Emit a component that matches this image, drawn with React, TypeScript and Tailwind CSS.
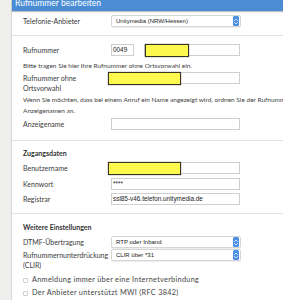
const Label = ({ children }: { children: React.ReactNode }) => (
  <div className="w-[88px] shrink-0 text-[7px] leading-[10px] text-[#3a3a3a]">{children}</div>
);

const Input = ({ value, yellow, w = "w-[129px]" }: { value?: string; yellow?: string; w?: string }) => (
  <div className={`relative ${w} h-[12px] border border-[#cfcfcf] bg-white flex items-center px-[1px]`}>
    <span className="font-['Liberation_Sans',sans-serif] text-[6.4px] leading-[6px] text-[#222]">{value}</span>
    {yellow && (
      <div className={`absolute top-[-1px] ${yellow} h-[13px] bg-[#fdf94e] border border-[#3a3320] shadow-[0_0_1px_#555]`} />
    )}
  </div>
);

const Select = ({ value }: { value: string }) => (
  <div className="w-[130px] h-[12px] rounded-[2px] border border-[#d6d6d6] bg-white flex items-center justify-between pl-[4px] pr-[1px] shadow-[0_1px_0_#eee]">
    <span className="font-['Liberation_Sans',sans-serif] text-[6px] leading-[6px] text-[#222]">{value}</span>
    <div className="w-[6px] h-[10px] rounded-[1.5px] bg-[#4a8ee6] flex flex-col items-center justify-center gap-[1px]">
      <svg width="4" height="2" viewBox="0 0 4 2"><path d="M0 2 L2 0 L4 2" fill="none" stroke="#fff" strokeWidth="0.7" /></svg>
      <svg width="4" height="2" viewBox="0 0 4 2"><path d="M0 0 L2 2 L4 0" fill="none" stroke="#fff" strokeWidth="0.7" /></svg>
    </div>
  </div>
);

const Checkbox = ({ label }: { label: string }) => (
  <div className="flex items-center h-[10px] gap-[4px] text-[7.3px] tracking-[0.3px] text-[#444]">
    <div className="w-[5px] h-[5px] border border-[#cfcfcf] rounded-[1px] bg-white" />
    <span className="leading-[10px]">{label}</span>
  </div>
);

const Sep = ({ className }: { className: string }) => <div className={`h-px bg-[#e2e2e2] ${className}`} />;

export default function App() {
  return (
    <div className="flex w-[283px] h-[300px] overflow-hidden bg-white font-['Lato','Open_Sans',sans-serif]">
      <div className="w-[12px] shrink-0 bg-[#efefed] border-r border-[#d6d6d6]" />
      <div className="flex-1 flex flex-col min-w-0">
        <div className="h-[11px] shrink-0 overflow-hidden bg-[#4a8dd6] text-white text-[8.5px] leading-[6px] pl-[3px] shadow-[0_1px_1px_rgba(0,0,0,0.25)] whitespace-nowrap">
          Rufnummer bearbeiten
        </div>

        <div className="h-[24px] pt-[4px] pl-[11px]">
          <div className="flex items-center h-[12px]">
            <Label>Telefonie-Anbieter</Label>
            <Select value="Unitymedia (NRW/Hessen)" />
          </div>
        </div>
        <Sep className="" />

        <div className="pl-[11px] flex flex-col whitespace-nowrap">
          <div className="flex items-center h-[12px] mt-[8px]">
            <Label>Rufnummer</Label>
            <Input value="0049" w="w-[23px]" />
            <div className="w-[10px]" />
            <Input w="w-[96px]" yellow="left-[0px] w-[44px]" />
          </div>
          <div className="mt-[4px] h-[12px] text-[6.5px] leading-[12px] text-[#444]">
            Bitte tragen Sie hier Ihre Rufnummer ohne Ortsvorwahl ein.
          </div>
          <div className="flex items-start">
            <div className="pt-[1px]">
              <Label>
                Rufnummer ohne
                <br />
                Ortsvorwahl
              </Label>
            </div>
            <Input yellow="left-[-4px] w-[73px]" />
          </div>
          <div className="mt-[1px] text-[6.5px] leading-[11px] text-[#444] overflow-hidden">
            Wenn Sie möchten, dass bei einem Anruf ein Name angezeigt wird, ordnen Sie der Rufnummer einen
            <br />
            Anzeigenamen an.
          </div>
          <div className="flex items-center h-[12px] mt-[2px]">
            <Label>Anzeigename</Label>
            <Input />
          </div>
        </div>

        <Sep className="mt-[10px]" />

        <div className="pl-[11px] flex flex-col whitespace-nowrap">
          <div className="mt-[7px] h-[10px] text-[7px] leading-[10px] font-bold text-[#333]">Zugangsdaten</div>
          <div className="flex items-center h-[12px] mt-[4px]">
            <Label>Benutzername</Label>
            <Input yellow="left-[-4px] w-[73px]" />
          </div>
          <div className="flex items-center h-[12px] mt-[4px]">
            <Label>Kennwort</Label>
            <Input value="****" />
          </div>
          <div className="flex items-center h-[12px] mt-[3px]">
            <Label>Registrar</Label>
            <Input value="ssl85-v46.telefon.unitymedia.de" />
          </div>
        </div>

        <Sep className="mt-[8px]" />

        <div className="pl-[11px] flex flex-col whitespace-nowrap">
          <div className="mt-[8px] h-[10px] text-[7px] leading-[10px] font-bold text-[#333]">Weitere Einstellungen</div>
          <div className="flex items-center h-[12px] mt-[4px]">
            <Label>DTMF-Übertragung</Label>
            <Select value="RTP oder Inband" />
          </div>
          <div className="flex items-start mt-[1px]">
            <div className="pt-[1px]">
              <Label>
                Rufnummernunterdrückung
                <br />
                (CLIR)
              </Label>
            </div>
            <Select value="CLIR über *31" />
          </div>
          <div className="mt-[5px]">
            <Checkbox label="Anmeldung immer über eine Internetverbindung" />
          </div>
          <div className="mt-[3px]">
            <Checkbox label="Der Anbieter unterstützt MWI (RFC 3842)" />
          </div>
        </div>
      </div>
    </div>
  );
}
